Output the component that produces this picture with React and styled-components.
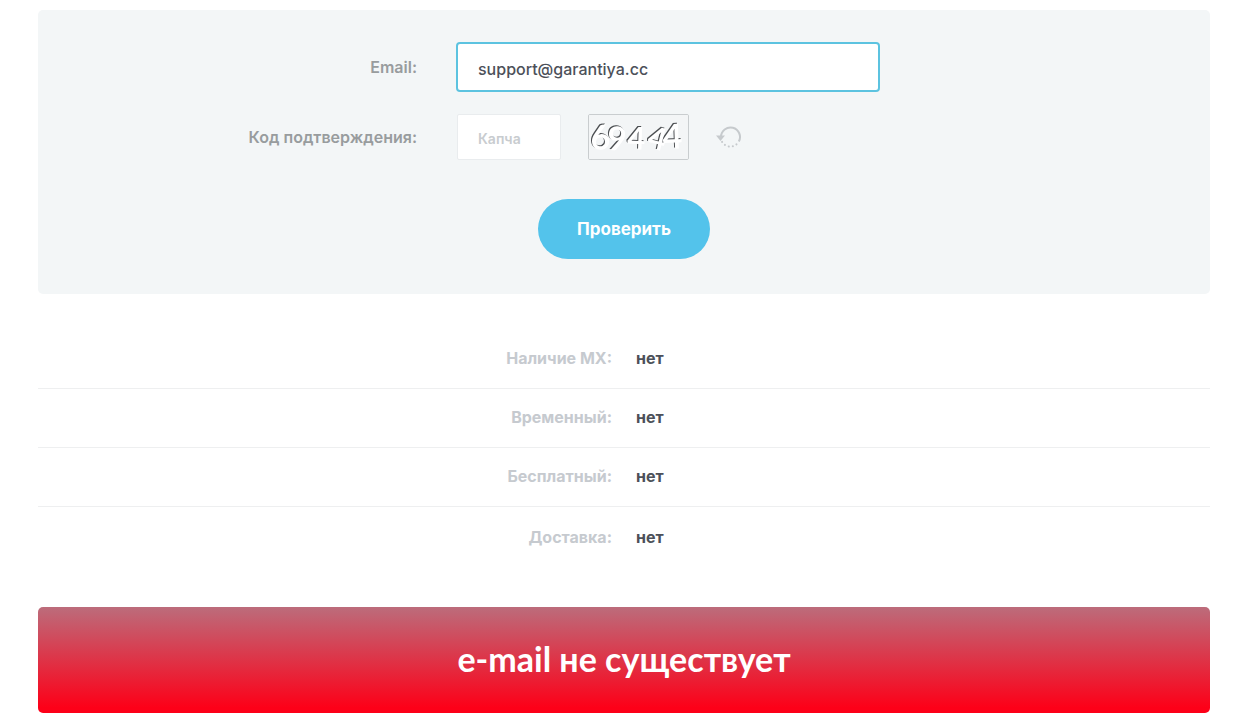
import React, { useState } from "react"
import styled, { createGlobalStyle } from "styled-components"

const GlobalStyle = createGlobalStyle`
  *, *::before, *::after{
    box-sizing: border-box;
  }
  body{
    margin: 0;
    background-color: #fff;
    color: #4c5059;
    font-family: Inter, "Open Sans", sans-serif;
    font-size: 16px;
    line-height: 20px;
  }
`;

const Page = styled.main`
  padding: 10px 44px 8px 38px;
`;

const Form = styled.form`
  display: flex;
  flex-direction: column;
  align-items: center;
  padding: 32px 0 35px;
  border-radius: 5px;
  background-color: #f3f6f7;
`;

const Field = styled.div`
  display: grid;
  grid-template-columns: 379fr 424fr 291fr;
  column-gap: 39px;
  align-items: center;
  width: 100%;
  margin-bottom: ${props => props.$last ? "39px" : "22px"};
`;

const Label = styled.label`
  color: #989c9e;
  font-weight: 600;
  text-align: right;
`;

const Input = styled.input`
  width: 100%;
  height: 50px;
  padding: 3px 20px 0;
  border: 2px solid #5cc3e0;
  border-radius: 4px;
  outline: none;
  background-color: #fff;
  color: #4c5059;
  font: inherit;
  font-weight: 500;
`;

const CaptchaInput = styled(Input)`
  width: 104px;
  height: 46px;
  border: 1px solid #e9ecee;
  border-radius: 2px;
  font-size: 14px;
  &::placeholder{
    color: #c8cccf;
    font-weight: 600;
    opacity: 1;
  }
`;

const CaptchaGroup = styled.div`
  display: flex;
  align-items: center;
  gap: 27px;
  padding-left: 1px;
`;

const CaptchaImage = styled.svg`
  flex: none;
  width: 101px;
  height: 46px;
  border: 1px solid #c9cdcf;
  border-radius: 2px;
`;

const CaptchaDigits = styled.g`
  fill: #fff;
  font-family: Lato, sans-serif;
  font-weight: 700;
  filter: drop-shadow(-1px -1px 0 #4a4d50);
`;

const RefreshButton = styled.button`
  display: flex;
  padding: 0;
  border: 0;
  background: none;
  color: #c6cacd;
  cursor: pointer;
`;

const Submit = styled.button`
  height: 60px;
  padding: 0 39px;
  border: 0;
  border-radius: 30px;
  background-color: #53c3eb;
  color: #fff;
  font: inherit;
  font-size: 17px;
  font-weight: 700;
  cursor: pointer;
`;

const Results = styled.dl`
  margin: 36px 0 41px;
`;

const ResultRow = styled.div`
  display: grid;
  grid-template-columns: 1fr 1fr;
  column-gap: 24px;
  padding: 18px 0 20px;
  border-bottom: 1px solid #eeeff0;
  &:last-child{
    padding: 20px 0 19px;
    border-bottom: 0;
  }
`;

const ResultName = styled.dt`
  color: #c6cacf;
  font-weight: 700;
  text-align: right;
`;

const ResultValue = styled.dd`
  margin: 0;
  font-weight: 700;
`;

const Banner = styled.h2`
  margin: 0;
  padding: 32px 20px 34px;
  border-radius: 5px;
  background: linear-gradient(#bc6c7b, #fd0018 95%);
  color: #fff;
  font-family: Lato, sans-serif;
  font-size: 34px;
  font-weight: 700;
  line-height: 40px;
  text-align: center;
`;

const digits = [
  { value: "6", x: 2, y: 35, size: 34, rotate: -3 },
  { value: "9", x: 18, y: 35, size: 33, rotate: 2 },
  { value: "4", x: 38, y: 34, size: 31, rotate: 2 },
  { value: "4", x: 57, y: 32, size: 31, rotate: 14 },
  { value: "4", x: 74, y: 34, size: 34, rotate: -2 },
]

const results = [
  { name: "Наличие MX:", value: "нет" },
  { name: "Временный:", value: "нет" },
  { name: "Бесплатный:", value: "нет" },
  { name: "Доставка:", value: "нет" },
]

const Captcha = () => (
  <CaptchaImage viewBox="0 0 99 44" role="img" aria-label="Капча">
    <rect width="99" height="44" fill="#f3f5f6" />
    <CaptchaDigits>
      {digits.map(digit => (
        <text
          key={digit.x}
          fontSize={digit.size}
          transform={`translate(${digit.x} ${digit.y}) rotate(${digit.rotate})`}
        >
          {digit.value}
        </text>
      ))}
    </CaptchaDigits>
  </CaptchaImage>
)

const RefreshIcon = () => (
  <svg width="26" height="24" viewBox="0 0 26 24" fill="none" aria-hidden="true">
    <path d="M5 12a9.5 9.5 0 1 1 17.8 4.6" stroke="currentColor" strokeWidth="2" />
    <path d="M20.5 19.3a9.5 9.5 0 0 1-14.5-2.6" stroke="currentColor" strokeWidth="2" strokeLinecap="round" strokeDasharray="0.1 4" />
    <path d="M0 10.5h9L4.5 16z" fill="currentColor" />
  </svg>
)

const App = () => {
  const [email, setEmail] = useState("support@garantiya.cc");
  const [code, setCode] = useState("");
  return(
  <Page>
    <GlobalStyle />
    <Form onSubmit={ e => e.preventDefault() }>
      <Field>
        <Label htmlFor="email">Email:</Label>
        <Input id="email" type="email" value={ email } onChange={ e => setEmail(e.target.value) } />
      </Field>
      <Field $last>
        <Label htmlFor="code">Код подтверждения:</Label>
        <CaptchaGroup>
          <CaptchaInput id="code" type="text" placeholder="Капча" value={ code } onChange={ e => setCode(e.target.value) } />
          <Captcha />
          <RefreshButton type="button" aria-label="Обновить">
            <RefreshIcon />
          </RefreshButton>
        </CaptchaGroup>
      </Field>
      <Submit type="submit">Проверить</Submit>
    </Form>
    <Results>
      {results.map(row => (
        <ResultRow key={ row.name }>
          <ResultName>{ row.name }</ResultName>
          <ResultValue>{ row.value }</ResultValue>
        </ResultRow>
      ))}
    </Results>
    <Banner>e-mail не существует</Banner>
  </Page>
)
}

export default App
